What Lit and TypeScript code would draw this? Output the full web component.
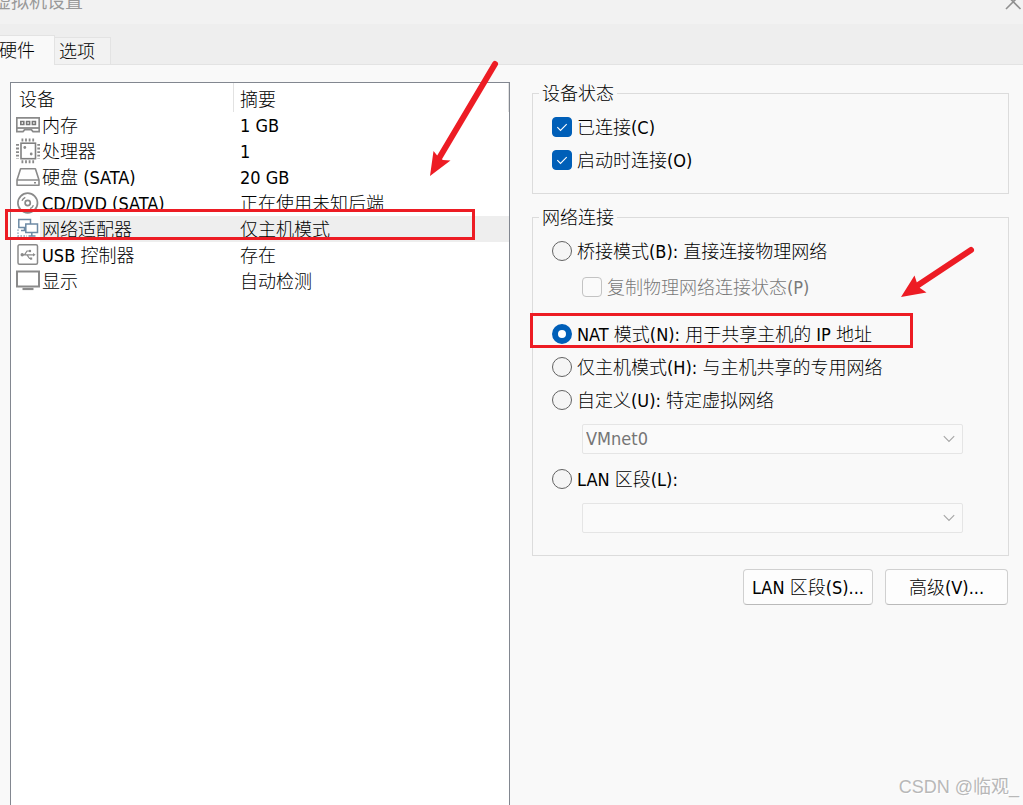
import { LitElement, html, svg, css, nothing } from "lit";
import { customElement, state } from "lit/decorators.js";
import { classMap } from "lit/directives/class-map.js";

interface Device {
  id: string;
  name: string;
  summary: string;
}

const DEVICES: Device[] = [
  { id: "memory", name: "内存", summary: "1 GB" },
  { id: "cpu", name: "处理器", summary: "1" },
  { id: "disk", name: "硬盘 (SATA)", summary: "20 GB" },
  { id: "cd", name: "CD/DVD (SATA)", summary: "正在使用未知后端" },
  { id: "network", name: "网络适配器", summary: "仅主机模式" },
  { id: "usb", name: "USB 控制器", summary: "存在" },
  { id: "display", name: "显示", summary: "自动检测" },
];

const ICONS: Record<string, unknown> = {
  memory: svg`
    <path d="M.8 5.800h22.400v13.800h-6.200l-1.700-2h-6.600l-1.700 2H.8z" fill="#fff" stroke="#8a8a8a" stroke-width="1.700"/>
    <path d="M1 16h22" stroke="#8a8a8a" stroke-width="1.800"/>
    <path d="M4.800 9.500h3v3h-3zM10.600 9.500h3v3h-3zM16.400 9.500h3v3h-3z" fill="none" stroke="#777" stroke-width="1.600"/>`,
  cpu: svg`
    <rect x="5" y="5.200" width="14.500" height="15.500" fill="none" stroke="#808080" stroke-width="1.600"/>
    <path d="M5.500 2h14M5.500 23.800h14" stroke="#8a8a8a" stroke-width="3" stroke-dasharray="1.800 1.800" fill="none"/>
    <path d="M1.500 6v15M22.800 6v15" stroke="#8a8a8a" stroke-width="3" stroke-dasharray="1.800 1.800" fill="none"/>
    <circle cx="8.800" cy="9.500" r="1.400" fill="#8a8a8a"/><circle cx="15.200" cy="16" r="1.400" fill="#8a8a8a"/>`,
  disk: svg`
    <path d="M4.600 4.700h14.800L23 16v5.200H1V16z" fill="#fff" stroke="#8a8a8a" stroke-width="1.600" stroke-linejoin="round"/>
    <path d="M1 16h22" stroke="#8a8a8a" stroke-width="1.500"/>
    <path d="M18 18.700h2" stroke="#8a8a8a" stroke-width="1.600"/>`,
  cd: svg`
    <circle cx="11.700" cy="13" r="9.800" fill="#fff" stroke="#8a8a8a" stroke-width="1.700"/>
    <circle cx="11.700" cy="13" r="2.600" fill="none" stroke="#8a8a8a" stroke-width="1.700"/>
    <path d="M6 10.800Q7 8.300 9.300 7.300M17.400 15.200Q16.400 17.700 14.100 18.700" fill="none" stroke="#8a8a8a" stroke-width="1.400"/>`,
  network: svg`
    <path d="M2.800 3.500h11.700v8H2.800z" fill="#fff" stroke="#6d8aa5" stroke-width="1.500"/>
    <path d="M8.500 11.500v3M5 14.500h5" stroke="#6d8aa5" stroke-width="1.500"/>
    <path d="M9.800 8h11.700v8.500H9.800z" fill="#fff" stroke="#6d8aa5" stroke-width="1.500"/>
    <path d="M15.800 16.500v3M12.500 20h7" stroke="#6d8aa5" stroke-width="1.500"/>
    <path d="M2 13.500v6.500h9" fill="none" stroke="#6d8aa5" stroke-width="1.300" stroke-dasharray="1.300 1.700"/>`,
  usb: svg`
    <rect x="2" y="2.800" width="19.500" height="19.500" rx="1.500" fill="#fff" stroke="#8a8a8a" stroke-width="1.500"/>
    <path d="M6 12.800h12M8.500 12.800l2.500-3.800h3M11 12.800l2.500 3.700H15" fill="none" stroke="#8a8a8a" stroke-width="1.200"/>
    <circle cx="6.200" cy="12.800" r="1.700" fill="#8a8a8a"/><circle cx="14" cy="9" r="1.200" fill="#8a8a8a"/>
    <path d="M14 15.500h2.200v2.200H14z" fill="#8a8a8a"/><path d="M17 11l2.600 1.800-2.600 1.800z" fill="#8a8a8a"/>`,
  display: svg`
    <rect x="1" y="3.500" width="22" height="15" fill="#fff" stroke="#8a8a8a" stroke-width="2"/>
    <path d="M6.500 21h11" stroke="#8a8a8a" stroke-width="2.200"/>`,
};

@customElement("device-list")
export class DeviceList extends LitElement {
  @state() private selected = "network";

  static styles = css`
    :host {
      display: block;
      position: relative;
      box-sizing: border-box;
      border: 1px solid #828790;
      border-bottom: 0;
      background: #fff;
    }
    .table {
      width: 100%;
      table-layout: fixed;
      border-collapse: separate;
      border-spacing: 0;
      line-height: 24px;
    }
    .name-col {
      width: 223px;
    }
    .head {
      height: 29px;
      box-sizing: border-box;
      padding: 4px 0 0 8px;
      font-weight: inherit;
      text-align: left;
      border-right: 1px solid #e2e2e2;
    }
    .head.summary {
      padding-left: 6px;
    }
    .cell {
      box-sizing: border-box;
      padding: 0;
      height: 26px;
      white-space: nowrap;
    }
    .device {
      display: flex;
      padding-left: 5px;
    }
    .icon {
      width: 24px;
      height: 26px;
      flex: none;
    }
    .text {
      flex: 1;
      padding: 2px 0 0 2px;
    }
    .cell.summary {
      padding: 2px 0 0 6px;
    }
    .selected .text,
    .selected .summary {
      background: #eee;
    }
    .marks {
      position: absolute;
      left: -11px;
      top: -33px;
      width: 510px;
      height: 200px;
      pointer-events: none;
    }
  `;

  render() {
    return html`
      <table class="table">
        <colgroup><col class="name-col" /><col /></colgroup>
        <thead>
          <tr>
            <th class="head" scope="col">设备</th>
            <th class="head summary" scope="col">摘要</th>
          </tr>
        </thead>
        <tbody>
          ${DEVICES.map(
            (d) => html`<tr
              class=${classMap({ selected: d.id === this.selected })}
              @click=${() => (this.selected = d.id)}
            >
              <td class="cell">
                <div class="device">
                  <svg class="icon" viewBox="0 0 24 26" aria-hidden="true">${ICONS[d.id]}</svg>
                  <span class="text">${d.name}</span>
                </div>
              </td>
              <td class="cell summary">${d.summary}</td>
            </tr>`
          )}
        </tbody>
      </table>
      <svg class="marks" viewBox="0 50 510 200" aria-hidden="true">
        <rect x="6.500" y="210.500" width="467" height="28" fill="none" stroke="#ed1c24" stroke-width="3" />
        <path d="M495 64L438 160" stroke="#ed1c24" stroke-width="6" stroke-linecap="round" />
        <path d="M430 176L433.500 151L438 156.500L443 160L450.500 160.500Z" fill="#ed1c24" />
      </svg>
    `;
  }
}

@customElement("adapter-settings")
export class AdapterSettings extends LitElement {
  @state() private mode = "nat";

  static styles = css`
    :host {
      display: block;
      position: relative;
    }
    .group {
      margin: 0 0 12px;
      min-width: 0;
      padding: 0 45px 17px 19px;
      border: 1px solid #dcdcdc;
    }
    .group.network {
      margin-bottom: 13px;
      padding-bottom: 22px;
    }
    .legend {
      margin-left: -13px;
      padding: 0 3px;
      height: 23px;
      line-height: 24px;
    }
    .rows {
      padding-top: 5px;
    }
    .row {
      display: flex;
      align-items: center;
      gap: 5px;
      height: 33px;
      white-space: nowrap;
    }
    .row.sub {
      margin: 3px 0 14px 30px;
      color: #7a7a7a;
    }
    .row.lan {
      margin-top: 8px;
    }
    .caption {
      padding-top: 3px;
    }
    .box,
    .radio {
      appearance: none;
      flex: none;
      box-sizing: border-box;
      width: 20px;
      height: 20px;
      margin: 0;
      border: 1px solid #626262;
      background: #f5f5f5;
    }
    .box {
      border-radius: 4px;
    }
    .box:checked {
      border-color: #005fb8;
      background: #005fb8
        url("data:image/svg+xml,%3Csvg xmlns='http://www.w3.org/2000/svg' viewBox='0 0 18 18'%3E%3Cpath d='M4.300 9.200l3.200 3.300 6.200-6.300' fill='none' stroke='white' stroke-width='1.100'/%3E%3C/svg%3E");
    }
    .box:disabled {
      border-color: #c3c3c3;
      background: #fafafa;
    }
    .radio {
      border-radius: 50%;
    }
    .radio:checked {
      border: 6px solid #005fb8;
      background: #fff;
    }
    .combo {
      appearance: none;
      display: block;
      box-sizing: border-box;
      width: calc(100% - 30px);
      height: 30px;
      margin: 8px 0 0 30px;
      padding: 0 30px 0 3px;
      border: 1px solid #e5e5e5;
      border-radius: 2px;
      color: #757575;
      opacity: 1;
      font: inherit;
      background: #fafafa
        url("data:image/svg+xml,%3Csvg xmlns='http://www.w3.org/2000/svg' viewBox='0 0 12 8'%3E%3Cpath d='M.8 1.200L6 6.400l5.200-5.200' fill='none' stroke='%23a5a5a5' stroke-width='1.100'/%3E%3C/svg%3E")
        no-repeat right 7px center / 12px 8px;
    }
    .buttons {
      display: flex;
      justify-content: flex-end;
      gap: 12px;
      padding-right: 1px;
    }
    .button {
      box-sizing: border-box;
      min-width: 123px;
      height: 36px;
      padding: 2px 8px 0;
      border: 1px solid #d0d0d0;
      border-bottom-color: #bababa;
      border-radius: 4px;
      background: #fdfdfd;
      color: #000;
      font: inherit;
      white-space: nowrap;
    }
    .marks {
      position: absolute;
      left: -12px;
      top: 148px;
      width: 480px;
      height: 130px;
      pointer-events: none;
    }
  `;

  private radio(value: string, label: string, extra = "") {
    return html`<label class="row ${extra}">
      <input
        class="radio"
        type="radio"
        name="mode"
        .checked=${this.mode === value}
        @change=${() => (this.mode = value)}
      />
      <span class="caption">${label}</span>
    </label>`;
  }

  private combo(label: string, value: string, enabled: boolean) {
    return html`<select class="combo" aria-label=${label} ?disabled=${!enabled}>
      ${value ? html`<option>${value}</option>` : nothing}
    </select>`;
  }

  render() {
    return html`
      <fieldset class="group">
        <legend class="legend">设备状态</legend>
        <div class="rows">
          <label class="row">
            <input class="box" type="checkbox" checked /><span class="caption">已连接(C)</span>
          </label>
          <label class="row">
            <input class="box" type="checkbox" checked /><span class="caption">启动时连接(O)</span>
          </label>
        </div>
      </fieldset>
      <fieldset class="group network">
        <legend class="legend">网络连接</legend>
        <div class="rows">
          ${this.radio("bridged", "桥接模式(B): 直接连接物理网络")}
          <label class="row sub">
            <input class="box" type="checkbox" ?disabled=${this.mode !== "bridged"} />
            <span class="caption">复制物理网络连接状态(P)</span>
          </label>
          ${this.radio("nat", "NAT 模式(N): 用于共享主机的 IP 地址")}
          ${this.radio("host", "仅主机模式(H): 与主机共享的专用网络")}
          ${this.radio("custom", "自定义(U): 特定虚拟网络")}
          ${this.combo("特定虚拟网络", "VMnet0", this.mode === "custom")}
          ${this.radio("lan", "LAN 区段(L):", "lan")}
          ${this.combo("LAN 区段", "", this.mode === "lan")}
        </div>
      </fieldset>
      <div class="buttons">
        <button class="button" type="button">LAN 区段(S)...</button>
        <button class="button" type="button">高级(V)...</button>
      </div>
      <svg class="marks" viewBox="520 230 480 130" aria-hidden="true">
        <rect x="531.500" y="314.500" width="380" height="32" fill="none" stroke="#ed1c24" stroke-width="3" />
        <path d="M971 250L916 286.500" stroke="#ed1c24" stroke-width="6" stroke-linecap="round" />
        <path d="M901 297L914.500 275.500L917 283L920 288L926.500 292.500Z" fill="#ed1c24" />
      </svg>
    `;
  }
}

@customElement("app-root")
export class AppRoot extends LitElement {
  @state() private tab = "hardware";

  static styles = css`
    :host {
      display: flex;
      flex-direction: column;
      position: relative;
      height: 100vh;
      overflow: hidden;
      background: #f9f9f9;
      color: #000;
      font-family: "DejaVu Sans Condensed", "Noto Sans CJK SC", sans-serif;
      font-size: 18px;
      font-weight: 300;
      line-height: 24px;
    }
    .title-bar {
      flex: none;
      display: flex;
      justify-content: space-between;
      align-items: flex-start;
      height: 24px;
      overflow: hidden;
      background: #f2f2f2;
      color: #999;
    }
    .title {
      margin: -10px 0 0 -7px;
      font-size: 18px;
      font-weight: 400;
      line-height: 24px;
    }
    .close {
      width: 20px;
      height: 20px;
      margin-top: -8px;
      padding: 0;
      border: 0;
      background: none;
      line-height: 0;
    }
    .tabs {
      flex: none;
      display: flex;
      align-items: flex-end;
      height: 41px;
      box-sizing: border-box;
      background: #eee;
      box-shadow: inset 0 -1px #e3e3e3;
    }
    .tab {
      box-sizing: border-box;
      height: 28px;
      padding: 2px 15px 0 4px;
      border: 1px solid #e3e3e3;
      border-left: 0;
      background: #f2f2f2;
      color: #000;
      font: inherit;
    }
    .tab.active {
      height: 30px;
      padding: 0 19px 0 0;
      margin-left: -1px;
      border-bottom: 0;
      background: #f9f9f9;
    }
    .content {
      flex: 1;
      display: grid;
      grid-template-columns: 500fr 477fr;
      gap: 22px;
      padding: 17px 14px 0 10px;
    }
    .watermark {
      position: absolute;
      right: 4px;
      bottom: 6px;
      font-family: "Liberation Sans", "Noto Sans CJK SC", sans-serif;
      font-size: 18px;
      font-weight: 400;
      color: #b8b8b8;
      text-shadow: 1px 1px #fff;
    }
  `;

  private tabButton(id: string, label: string) {
    return html`<button
      class=${classMap({ tab: true, active: this.tab === id })}
      type="button"
      role="tab"
      aria-selected=${this.tab === id}
      @click=${() => (this.tab = id)}
    >
      ${label}
    </button>`;
  }

  render() {
    return html`
      <header class="title-bar">
        <h1 class="title">虚拟机设置</h1>
        <button class="close" type="button" aria-label="关闭">
          <svg width="20" height="20" viewBox="0 0 20 20" aria-hidden="true">
            <path d="M3 2.500L17.500 17M17.500 2.500L3 17" stroke="#909090" stroke-width="1.600" />
          </svg>
        </button>
      </header>
      <nav class="tabs" role="tablist">
        ${this.tabButton("hardware", "硬件")} ${this.tabButton("options", "选项")}
      </nav>
      <main class="content">
        <device-list></device-list>
        <adapter-settings></adapter-settings>
      </main>
      <div class="watermark">CSDN @临观_</div>
    `;
  }
}
